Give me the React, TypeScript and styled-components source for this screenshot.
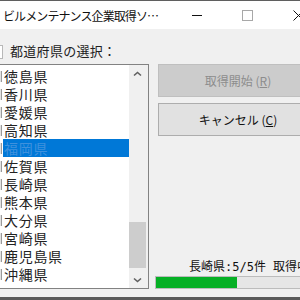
import React from "react";
import styled, { createGlobalStyle } from "styled-components";

const GlobalStyle = createGlobalStyle`
  html, body {
    margin: 0;
    padding: 0;
    overflow: hidden;
    background: #f0f0f0;
  }
  body {
    font-family: "Noto Sans CJK JP", "Noto Sans", sans-serif;
    color: #1a1a1a;
  }
`;

const Window = styled.div`
  width: 324px;
  height: 300px;
  box-sizing: border-box;
  border-top: 1px solid #5f5f5f;
  border-bottom: 3px solid #5a5a5a;
  background: #f0f0f0;
  display: flex;
  flex-direction: column;
`;

const TitleBar = styled.div`
  height: 28px;
  background: #ffffff;
  display: flex;
  align-items: center;
`;

const Title = styled.div`
  flex: 1;
  min-width: 0;
  padding: 0 6px 0 3px;
  font-size: 12px;
  letter-spacing: -0.9px;
  white-space: nowrap;
  overflow: hidden;
  text-overflow: ellipsis;
  color: #111;
`;

const CaptionButton = styled.div`
  width: 51px;
  height: 28px;
  flex-shrink: 0;
  display: flex;
  align-items: center;
  justify-content: center;
`;

const Body = styled.div`
  flex: 1;
  padding-top: 14px;
  display: flex;
  flex-direction: column;
`;

const LabelRow = styled.div`
  height: 21px;
  display: flex;
  align-items: flex-start;
  gap: 7px;
`;

const LabelCheck = styled.span`
  width: 2px;
  height: 12px;
  margin-top: 2px;
  flex-shrink: 0;
  background: #ffffff;
  border: 1px solid #b8b8b8;
  border-left: none;
`;

const GroupLabel = styled.div`
  font-size: 13px;
  line-height: 16px;
  letter-spacing: 0.3px;
  color: #222;
`;

const ContentRow = styled.div`
  height: 225px;
  display: flex;
  gap: 9px;
`;

const ListBox = styled.div`
  width: 149px;
  flex-shrink: 0;
  box-sizing: border-box;
  border: 1px solid #828282;
  border-left: none;
  background: #ffffff;
  display: flex;
`;

const Items = styled.div`
  flex: 1;
  padding-top: 2px;
  overflow: hidden;
`;

const Row = styled.div`
  height: 18px;
  display: flex;
  align-items: center;
`;

const RowCheck = styled.span`
  width: 1px;
  height: 11px;
  flex-shrink: 0;
  background: #e2e2e2;
  border-right: 1px solid #9a9a9a;
`;

const ItemText = styled.div<{ $selected?: boolean }>`
  flex: 1;
  height: 18px;
  margin-left: 1px;
  padding-left: 1px;
  font-size: 14px;
  line-height: 18px;
  letter-spacing: 0.7px;
  white-space: nowrap;
  background: ${(p) => (p.$selected ? "#0078d7" : "transparent")};
  color: ${(p) => (p.$selected ? "#3f91dd" : "#222")};
`;

const ScrollBar = styled.div`
  width: 19px;
  background: #f0f0f0;
  display: flex;
  flex-direction: column;
`;

const ScrollArrow = styled.div`
  height: 17px;
  width: 17px;
  display: flex;
  align-items: center;
  justify-content: center;
`;

const ScrollTrack = styled.div`
  flex: 1;
  display: flex;
  flex-direction: column;
  justify-content: flex-end;
  padding-bottom: 3px;
`;

const Thumb = styled.div`
  width: 17px;
  height: 46px;
  background: #cdcdcd;
`;

const RightColumn = styled.div`
  width: 160px;
  flex-shrink: 0;
  display: flex;
  flex-direction: column;
`;

const Button = styled.div<{ $disabled?: boolean }>`
  height: 33px;
  box-sizing: border-box;
  border: 1px solid ${(p) => (p.$disabled ? "#bfbfbf" : "#adadad")};
  background: ${(p) => (p.$disabled ? "#cccccc" : "#e1e1e1")};
  color: ${(p) => (p.$disabled ? "#8d8d8d" : "#111")};
  font-size: 12px;
  display: flex;
  align-items: center;
  justify-content: center;
  margin-bottom: 6px;
  white-space: nowrap;
`;

const Spacer = styled.div`
  flex: 1;
`;

const Status = styled.div`
  padding-left: 31px;
  font-family: "DejaVu Sans Mono", "Noto Sans CJK JP", monospace;
  font-size: 12px;
  line-height: 16px;
  white-space: nowrap;
  overflow: hidden;
  color: #111;
  margin-bottom: 1px;
`;

const Progress = styled.div`
  width: 163px;
  height: 13px;
  margin-left: -3px;
  box-sizing: border-box;
  border: 1px solid #bcbcbc;
  background: #e6e6e6;
  display: flex;
`;

const ProgressFill = styled.div`
  flex-shrink: 0;
  background: #06b025;
  height: 100%;
`;

const prefectures = [
  "徳島県",
  "香川県",
  "愛媛県",
  "高知県",
  "福岡県",
  "佐賀県",
  "長崎県",
  "熊本県",
  "大分県",
  "宮崎県",
  "鹿児島県",
  "沖縄県",
];

const Chevron = ({ down }: { down?: boolean }) => (
  <svg width="9" height="6" viewBox="0 0 9 6">
    <path
      d={down ? "M1 1.5 L4.5 4.5 L8 1.5" : "M1 4.5 L4.5 1.5 L8 4.5"}
      fill="none"
      stroke="#606060"
      strokeWidth="1.6"
    />
  </svg>
);

const App = () => {
  const selected = 4;
  const done = 5;
  const total = 10;
  return (
    <>
      <GlobalStyle />
      <Window>
        <TitleBar>
          <Title>ビルメンテナンス企業取得ソフトウェア</Title>
          <CaptionButton>
            <svg width="10" height="10" viewBox="0 0 10 10">
              <line x1="0" y1="5.5" x2="10" y2="5.5" stroke="#111" strokeWidth="1" />
            </svg>
          </CaptionButton>
          <CaptionButton>
            <svg width="11" height="11" viewBox="0 0 11 11">
              <rect x="0.5" y="0.5" width="10" height="10" fill="none" stroke="#a8a8a8" strokeWidth="1" />
            </svg>
          </CaptionButton>
          <CaptionButton>
            <svg width="11" height="11" viewBox="0 0 11 11">
              <path d="M0.5 0.5 L10.5 10.5 M10.5 0.5 L0.5 10.5" stroke="#111" strokeWidth="1" />
            </svg>
          </CaptionButton>
        </TitleBar>
        <Body>
          <LabelRow>
            <LabelCheck />
            <GroupLabel>都道府県の選択：</GroupLabel>
          </LabelRow>
          <ContentRow>
            <ListBox>
              <Items>
                {prefectures.map((name, i) => (
                  <Row key={name}>
                    <RowCheck />
                    <ItemText $selected={i === selected}>{name}</ItemText>
                  </Row>
                ))}
              </Items>
              <ScrollBar>
                <ScrollArrow>
                  <Chevron />
                </ScrollArrow>
                <ScrollTrack>
                  <Thumb />
                </ScrollTrack>
                <ScrollArrow>
                  <Chevron down />
                </ScrollArrow>
              </ScrollBar>
            </ListBox>
            <RightColumn>
              <Button $disabled>
                取得開始 (<u>R</u>)
              </Button>
              <Button>
                キャンセル (<u>C</u>)
              </Button>
              <Spacer />
              <Status>長崎県:5/5件 取得中</Status>
              <Progress>
                <ProgressFill style={{ width: `${Math.round((161 * done) / total)}px` }} />
              </Progress>
            </RightColumn>
          </ContentRow>
        </Body>
      </Window>
    </>
  );
};

export default App;
